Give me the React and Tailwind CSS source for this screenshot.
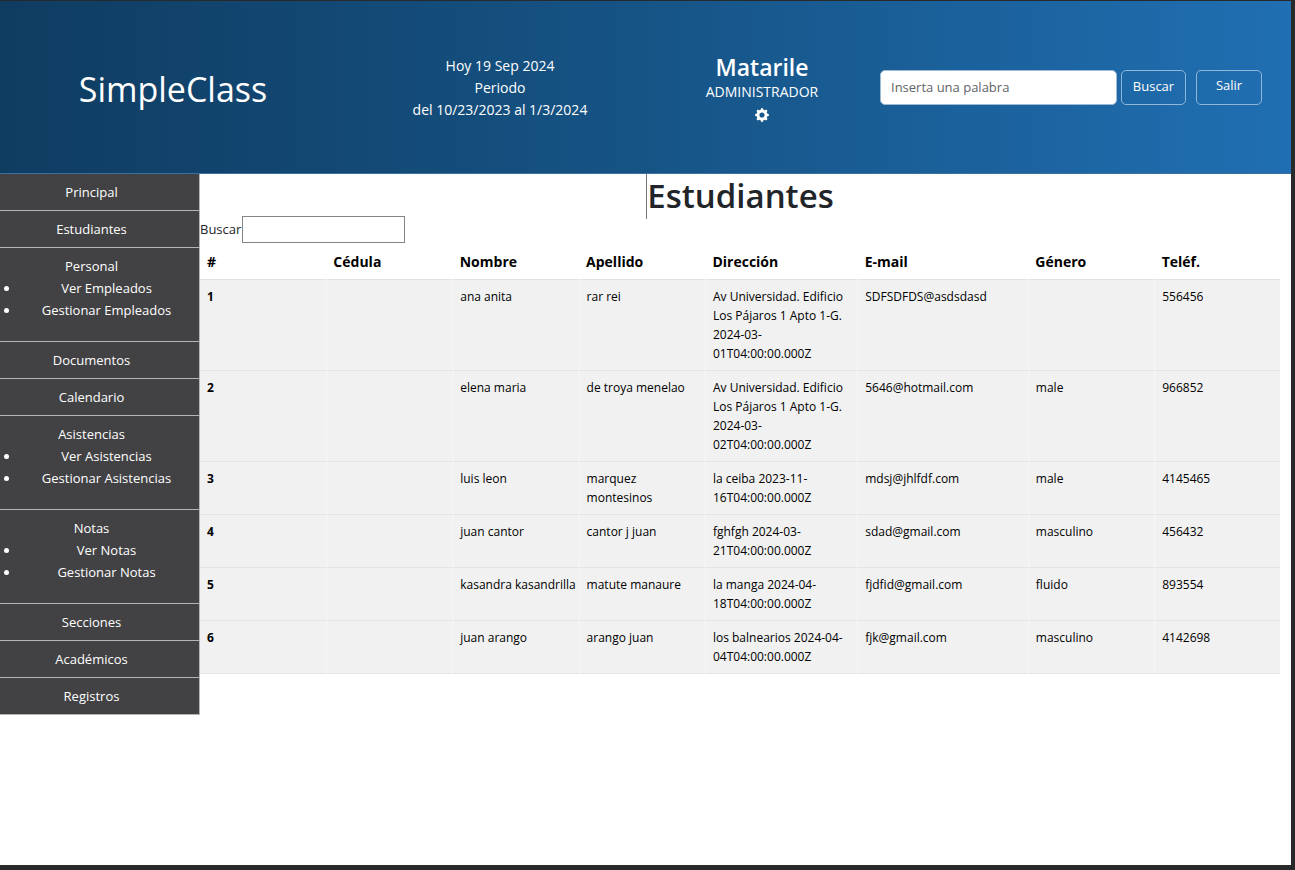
import React, { useState } from "react";
import { BsGearFill } from "react-icons/bs";

const menu = [
  { label: "Principal" },
  { label: "Estudiantes" },
  { label: "Personal", items: ["Ver Empleados", "Gestionar Empleados"] },
  { label: "Documentos" },
  { label: "Calendario" },
  { label: "Asistencias", items: ["Ver Asistencias", "Gestionar Asistencias"] },
  { label: "Notas", items: ["Ver Notas", "Gestionar Notas"] },
  { label: "Secciones" },
  { label: "Académicos" },
  { label: "Registros" },
];

const columns = [
  { label: "#", width: "w-[11.7%]" },
  { label: "Cédula", width: "w-[11.7%]" },
  { label: "Nombre", width: "w-[11.7%]" },
  { label: "Apellido", width: "w-[11.7%]" },
  { label: "Dirección", width: "w-[14.1%]" },
  { label: "E-mail", width: "w-[15.8%]" },
  { label: "Género", width: "w-[11.7%]" },
  { label: "Teléf.", width: "w-[11.6%]" },
];

const students = [
  ["", "ana anita", "rar rei", "Av Universidad. Edificio Los Pájaros 1 Apto 1-G. 2024-03-01T04:00:00.000Z", "SDFSDFDS@asdsdasd", "", "556456"],
  ["", "elena maria", "de troya menelao", "Av Universidad. Edificio Los Pájaros 1 Apto 1-G. 2024-03-02T04:00:00.000Z", "5646@hotmail.com", "male", "966852"],
  ["", "luis leon", "marquez montesinos", "la ceiba 2023-11-16T04:00:00.000Z", "mdsj@jhlfdf.com", "male", "4145465"],
  ["", "juan cantor", "cantor j juan", "fghfgh 2024-03-21T04:00:00.000Z", "sdad@gmail.com", "masculino", "456432"],
  ["", "kasandra kasandrilla", "matute manaure", "la manga 2024-04-18T04:00:00.000Z", "fjdfid@gmail.com", "fluido", "893554"],
  ["", "juan arango", "arango juan", "los balnearios 2024-04-04T04:00:00.000Z", "fjk@gmail.com", "masculino", "4142698"],
];

function Header() {
  return (
    <header className="grid min-h-[173px] grid-cols-[346fr_308fr_216fr_421fr] items-center border-b border-[#3d6f9f] bg-linear-to-r from-[#0f3c61] via-[#165486] to-[#206fb2] text-white">
      <div className="pt-1 text-center text-[34px] leading-[44px]">SimpleClass</div>
      <div className="pt-[2px] text-center text-sm leading-[22px]">
        <p>Hoy 19 Sep 2024</p>
        <p>Periodo</p>
        <p>del 10/23/2023 al 1/3/2024</p>
      </div>
      <div className="flex flex-col items-center pt-[6px]">
        <p className="text-[23px] leading-[28px] font-semibold">Matarile</p>
        <p className="text-sm leading-[22px]">ADMINISTRADOR</p>
        <button type="button" aria-label="Configuración" className="flex h-6 items-center">
          <BsGearFill className="size-[14px]" />
        </button>
      </div>
      <div className="flex pr-[29px] pl-[10px]">
        <form className="flex min-w-0 flex-1 gap-1" onSubmit={(e) => e.preventDefault()}>
          <input
            type="search"
            aria-label="Inserta una palabra"
            placeholder="Inserta una palabra"
            className="h-[35px] min-w-0 flex-1 rounded-[5px] border border-[#9dbbd6] bg-white px-[10px] text-[13px] text-[#212529] placeholder:text-[#5f6469]"
          />
          <button type="submit" className="h-[35px] w-[65px] rounded-[5px] border border-[#8fb7da] text-[13px]">
            Buscar
          </button>
        </form>
        <button type="button" className="ml-[10px] h-[35px] w-[66px] rounded-[5px] border border-[#8fb7da] pb-[2px] text-[13px]">
          Salir
        </button>
      </div>
    </header>
  );
}

function Sidebar() {
  return (
    <nav className="w-[200px] shrink-0 self-start border-r border-[#b4b4b4] bg-[#424244] text-center text-[13px] leading-[22px] text-white">
      {menu.map(({ label, items }) => (
        <div key={label} className={items ? "border-b border-[#b4b4b4] pt-[7px] pb-5" : "border-b border-[#b4b4b4] py-[7px]"}>
          <a href="#" className="block pr-4">{label}</a>
          {items && (
            <ul className="list-disc pr-[6px] pl-5">
              {items.map((item) => (
                <li key={item}>
                  <a href="#">{item}</a>
                </li>
              ))}
            </ul>
          )}
        </div>
      ))}
    </nav>
  );
}

function StudentTable({ rows }) {
  return (
    <table className="mt-[3px] w-full table-fixed border-collapse text-left text-xs leading-[19px] text-black">
      <thead>
        <tr className="border-b border-[#dee2e6]">
          {columns.map(({ label, width }) => (
            <th key={label} scope="col" className={`${width} pt-[6px] pr-1 pb-2 pl-[7px] text-[14px] leading-[19px] font-bold`}>
              {label}
            </th>
          ))}
        </tr>
      </thead>
      <tbody>
        {rows.map(({ id, cells }) => (
          <tr key={id} className="divide-x divide-[#f6f6f6] border-b border-[#e2e4e7] bg-[#f1f1f1] align-top">
            <th scope="row" className="py-[7px] pr-1 pl-[7px] font-bold">{id}</th>
            {cells.map((cell, i) => (
              <td key={i} className={i === 1 ? "py-[7px] pl-[7px] whitespace-nowrap" : "py-[7px] pr-1 pl-[7px]"}>
                {cell}
              </td>
            ))}
          </tr>
        ))}
      </tbody>
    </table>
  );
}

export default function App() {
  const [query, setQuery] = useState("");
  const rows = students
    .map((cells, i) => ({ id: i + 1, cells }))
    .filter(({ cells }) => cells.join(" ").toLowerCase().includes(query.toLowerCase()));

  return (
    <div className="min-h-screen border-t border-r-4 border-b-[5px] border-[#28292b] bg-white font-['Open_Sans','Noto_Sans',sans-serif] text-[#212529]">
      <Header />
      <div className="flex">
        <Sidebar />
        <main className="min-w-0 flex-1 pr-[11px]">
          <div className="flex h-[42px] justify-center">
            <h1 className="h-[45px] border-l border-[#77797c] text-[33px] leading-[44px] font-semibold">Estudiantes</h1>
          </div>
          <div className="flex items-center text-[13px]">
            <label htmlFor="student-search" className="pr-px">Buscar</label>
            <input
              id="student-search"
              type="text"
              value={query}
              onChange={(e) => setQuery(e.target.value)}
              className="h-[27px] w-[163px] border border-[#858585] px-1"
            />
          </div>
          <StudentTable rows={rows} />
        </main>
      </div>
    </div>
  );
}
